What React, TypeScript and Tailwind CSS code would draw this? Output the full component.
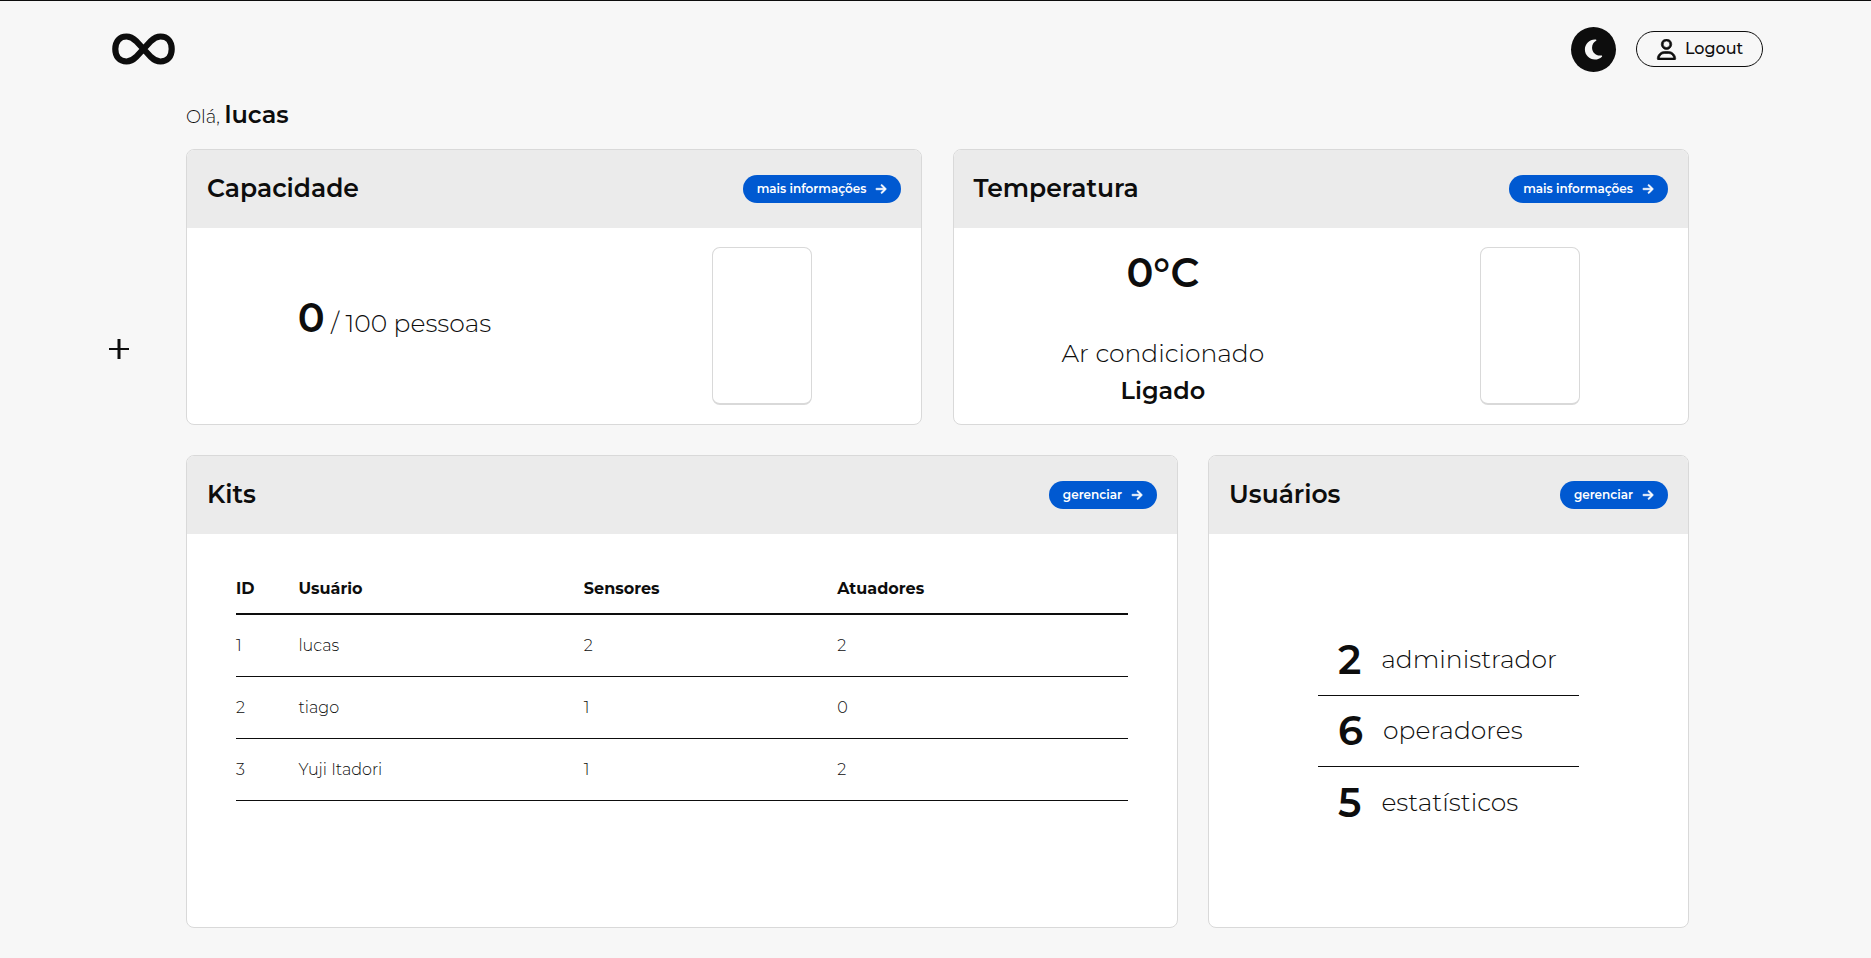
import { FaArrowRight, FaMoon, FaRegUser } from "react-icons/fa6";
import type { ReactNode } from "react";

function InfinityLogo() {
  return (
    <svg width="63" height="32" viewBox="0 0 63 32" fill="none" stroke="currentColor" strokeWidth="6.200" aria-hidden="true">
      <path d="M31.500 16L24 8C21 5 18.500 3.500 14.500 3.500C7.500 3.500 3.300 8.500 3.300 16C3.300 23.500 7.500 28.500 14.500 28.500C18.500 28.500 21 27 24 24L39 8C42 5 44.500 3.500 48.500 3.500C55.500 3.500 59.700 8.500 59.700 16C59.700 23.500 55.500 28.500 48.500 28.500C44.500 28.500 42 27 39 24Z" />
    </svg>
  );
}

function Card({ title, action, className, children }: { title: string; action: string; className: string; children: ReactNode }) {
  return (
    <section className={`flex flex-col overflow-hidden rounded-lg border border-[#d9d9d9] bg-white ${className}`}>
      <header className="flex h-[78px] shrink-0 items-center justify-between bg-[#ebebeb] px-5">
        <h2 className="pb-0.5 text-[25px] leading-8 font-semibold">{title}</h2>
        <button type="button" className="flex h-7 items-center gap-[9px] rounded-full bg-[#0059d1] px-[14px] text-[12px] font-semibold text-white">
          {action}
          <FaArrowRight size={12} stroke="currentColor" strokeWidth={24} aria-hidden="true" />
        </button>
      </header>
      {children}
    </section>
  );
}

function Gauge() {
  return <div className="h-[158px] w-[100px] rounded-lg border border-b-2 border-[#d9d9d9]" />;
}

const kits = [
  { id: 1, user: "lucas", sensors: 2, actuators: 2 },
  { id: 2, user: "tiago", sensors: 1, actuators: 0 },
  { id: 3, user: "Yuji Itadori", sensors: 1, actuators: 2 },
];

const roles = [
  { count: 2, label: "administrador" },
  { count: 6, label: "operadores" },
  { count: 5, label: "estatísticos" },
];

export default function App() {
  return (
    <div className="min-h-screen border-t border-[#0d0d0d] bg-[#f7f7f7] pr-[108px] pb-[30px] pl-28 font-['Montserrat','Inter',sans-serif] text-[#0d0d0d]">
      <header className="flex h-24 items-center justify-between">
        <a href="#" aria-label="Início"><InfinityLogo /></a>
        <div className="flex items-center gap-5">
          <button type="button" aria-label="Modo escuro" className="flex size-[45px] items-center justify-center rounded-full bg-[#0d0d0d] text-[#f7f7f7]">
            <FaMoon size={23} />
          </button>
          <button type="button" className="flex h-9 w-[127px] items-center justify-center gap-2 rounded-full border border-[#0d0d0d] text-[16px] font-medium">
            <FaRegUser size={21} stroke="currentColor" strokeWidth={16} aria-hidden="true" />
            Logout
          </button>
        </div>
      </header>
      <main className="flex pr-[74px]">
        <div className="w-[74px] shrink-0 pt-[241px]">
          <button type="button" aria-label="Adicionar" className="-ml-1 block">
            <svg width="22" height="22" viewBox="0 0 22 22" stroke="currentColor" aria-hidden="true">
              <path d="M1 11H21" strokeWidth="2" />
              <path d="M11 1V21" strokeWidth="3" />
            </svg>
          </button>
        </div>
        <div className="min-w-0 grow">
          <p className="h-[52px] text-[18px] leading-9 font-light">
            Olá, <span className="text-[24px] font-semibold">lucas</span>
          </p>
          <div className="flex flex-col gap-[30px]">
            <div className="flex justify-between">
              <Card title="Capacidade" action="mais informações" className="w-[49%]">
                <div className="grid h-[196px] grid-cols-[56.5%_43.5%] items-center justify-items-center">
                  <p className="pb-4 text-[25px] font-light">
                    <span className="text-[40px] font-semibold">0</span> / 100 pessoas
                  </p>
                  <Gauge />
                </div>
              </Card>
              <Card title="Temperatura" action="mais informações" className="w-[49%]">
                <div className="grid h-[196px] grid-cols-[57%_43%] items-center justify-items-center">
                  <div className="pt-1.5 text-center">
                    <p className="mb-[38px] text-[40px] leading-[48px] font-semibold">0°C</p>
                    <p className="text-[25px] leading-[37px] font-light">Ar condicionado</p>
                    <p className="text-[24px] leading-[37px] font-semibold">Ligado</p>
                  </div>
                  <Gauge />
                </div>
              </Card>
            </div>
            <div className="flex justify-between">
              <Card title="Kits" action="gerenciar" className="h-[473px] w-[66%]">
                <div className="px-[49px] pt-[29px]">
                  <table className="w-full table-fixed text-left text-[16px]">
                    <colgroup>
                      <col className="w-[7%]" />
                      <col className="w-[32%]" />
                      <col className="w-[28.4%]" />
                      <col />
                    </colgroup>
                    <thead>
                      <tr className="h-[51px] border-b-2 border-[#0d0d0d]">
                        <th className="pt-0.5 font-bold">ID</th>
                        <th className="pt-0.5 font-bold">Usuário</th>
                        <th className="pt-0.5 font-bold">Sensores</th>
                        <th className="pt-0.5 font-bold">Atuadores</th>
                      </tr>
                    </thead>
                    <tbody>
                      {kits.map((kit) => (
                        <tr key={kit.id} className="h-[62px] border-b border-[#0d0d0d] font-light">
                          <td className="pt-0.5">{kit.id}</td>
                          <td className="pt-0.5">{kit.user}</td>
                          <td className="pt-0.5">{kit.sensors}</td>
                          <td className="pt-0.5">{kit.actuators}</td>
                        </tr>
                      ))}
                    </tbody>
                  </table>
                </div>
              </Card>
              <Card title="Usuários" action="gerenciar" className="h-[473px] w-[32%]">
                <div className="flex grow items-center justify-center pt-0.5">
                  <ul className="w-[261px] divide-y divide-[#0d0d0d]">
                    {roles.map((role) => (
                      <li key={role.label} className="flex h-[71px] items-center gap-5 px-5">
                        <span className="text-[40px] font-semibold">{role.count}</span>
                        <span className="text-[25px] font-light">{role.label}</span>
                      </li>
                    ))}
                  </ul>
                </div>
              </Card>
            </div>
          </div>
        </div>
      </main>
    </div>
  );
}
